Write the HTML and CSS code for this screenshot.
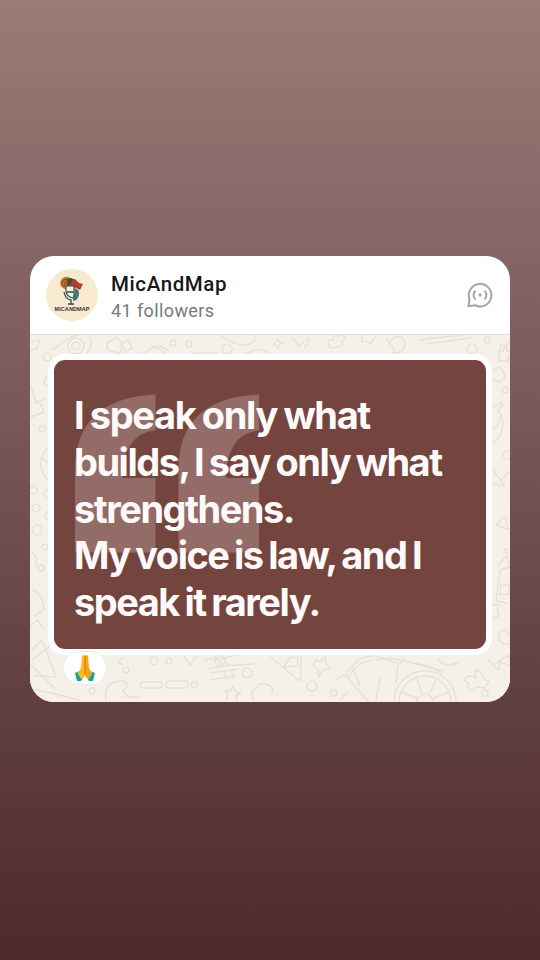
FILE: index.html
```html
<!DOCTYPE html>
<html lang="en">
<head>
<meta charset="utf-8">
<title>MicAndMap</title>
<link rel="stylesheet" href="styles.css">
</head>
<body>
<main class="card">
  <header class="head">
    <svg class="avatar" viewBox="0 0 52 52">
      <circle cx="26" cy="26" r="26" fill="#f8ead0"/>
      <circle cx="20.500" cy="14" r="6.200" fill="#cf7b22"/>
      <path d="M16 17q-1-7 6-7M18 18q0-6 6-7" fill="none" stroke="#8d531f" stroke-width="1.300"/>
      <path d="M20 16q1-7 9-6l4 4 4 1-3 6q-4-3-10-3z" fill="#b63d2c"/>
      <path d="M22 10q3-2 5 0l-2 5-4 1z" fill="#37523f"/>
      <path d="M20 17h8v12q-8-1-8-7z" fill="#fff3dc" stroke="#314852" stroke-width="1.100"/>
      <path d="M28 19q5 1 5 5 0 7-6 8v-5q3-3 1-8z" fill="#3f7580"/>
      <path d="M18 23q1 7 7 8v4m-3 0h6M21 23h7" fill="none" stroke="#314852" stroke-width="1.300"/>
      <text class="logo-text" x="26" y="41.500" text-anchor="middle" textLength="35">MICANDMAP</text>
    </svg>
    <div class="who">
      <h1 class="name">MicAndMap</h1>
      <p class="followers">41 followers</p>
    </div>
    <svg class="channel" viewBox="0 0 28 28" fill="none" stroke="#a5a8aa" stroke-width="2.100" stroke-linecap="round" stroke-linejoin="round">
      <path d="M3.500 18.200A11.300 11.300 0 1 1 9 24.300L2.500 25.300z"/>
      <path d="M9 10.200q-2.800 3.800 0 7.600M19 10.200q2.800 3.800 0 7.600" stroke-width="2"/>
      <circle cx="14" cy="14" r="1.700" fill="#a5a8aa" stroke="none"/>
    </svg>
  </header>
  <section class="chat">
    <svg class="doodles" viewBox="30 335 480 367" fill="none" stroke="#e7e0d7" stroke-width="1.500" stroke-linecap="round" stroke-linejoin="round">
      <!-- top strip -->
      <path d="M31 342l9-2-3 8-6 3M52 350l19-13 7-2M89 336q5 10-3 18M108 350q-3-9 4-9 2-6 6-1 6 1 2 6 4 6-2 7zM122 343l7-3 3 9-7 2zM143 354q12-12 22-1M152 347q8-4 16 4M193 353h23M222 336q17 13 30 7 4-3 3-8M246 354q13-9 25 0M292 337l7 9 10-9M310 339l-5 9M329 347q-3-8 4-7 0-6 5-4 5-3 7 3-5 2-2 5-6 6-14 3zM362 336v5l9 2 4-6M386 339q10 8 7 14 12 0 12-9 0-8-10-7l-7 7M419 340l44-5M426 344l45-6M499 352l2-8 5 4 4-7"/>
      <circle cx="76" cy="346" r="8"/><circle cx="76" cy="346" r="4"/><circle cx="47" cy="357" r="4"/>
      <circle cx="173" cy="343" r="3"/><circle cx="189" cy="344" r="3"/><circle cx="227" cy="349" r="5"/><circle cx="472" cy="349" r="5"/><circle cx="487" cy="340" r="3"/>
      <path d="M278 339l1 3 4 1-4 2-1 4-2-4-3-1 3-2z"/>
      <!-- left strip -->
      <path d="M47 376q-6 7 0 10M31 386l5 17 8-4M31 417l13-5-3-8M48 448q-14 12-1 32M42 458l8 7M31 552q8 4 4 15M33 590q10 4 11 19l-9 7M31 625l7-5 5 9M33 659l17-13M32 650l10-10 14 37-21-1M31 665l24 24"/>
      <circle cx="42" cy="429" r="3"/><circle cx="33" cy="490" r="4"/><circle cx="36" cy="508" r="4"/><circle cx="37" cy="530" r="5"/><circle cx="45" cy="547" r="3"/><circle cx="41" cy="568" r="3"/><circle cx="48" cy="494" r="4"/><circle cx="49" cy="516" r="4"/>
      <!-- right strip -->
      <path d="M498 352l5-1 2-5 3 5 4 1-4 5v5l-5-2-5 2 2-6zM493 370q8-6 10 2 5 5-3 10l-7-2M494 407l7-5 2 3-5 6q8 8 3 23-3 6-8 8M493 430q9-7 7-18M493 470l12 16-13-2M501 480l8-8M496 525l9-9 3 13zM498 566l9-11 3 12-10 3-4 31 11 2M501 585h8v9h-9zM493 605q8-3 4 5 5 5-3 8M498 638q2-9 7-8l5 6v9l-8-2zM498 661l12-6v11z"/>
      <circle cx="505" cy="390" r="3"/><circle cx="507" cy="455" r="4"/><circle cx="506" cy="551" r="2"/><circle cx="485" cy="693" r="3"/>
      <!-- bottom strip -->
      <path d="M30 689q19 3 49 11M106 701q-3-16 9-19 10-3 13 3l-5 6 5 6 9 0M123 657l-5 5 5 3M184 656l6 9 7-9M205 662q5-6 10-2l31-7M208 669l13-3 34-2M210 673l28-4M209 680l26-4M214 656l8 8M228 665l-3-7M223 671l4 8M231 670l3 8M271 657l27 23h3v-24M284 667l6-10 8 1v8l-14 1M316 660l5 2 4-6 1 8 5 4-8 2-4 7-1-8-5-4zM345 677q10-22 31-21M348 678q9-17 26-18M337 679l6-4 5 3 20 23M352 666l8 20M380 678l-4 22M376 656l22 7-2 20M376 660l14-2 42 9 10 7M400 665l2-5 40 11M438 660q9 9 21 2M464 680q5-7 12-2l-1-8 5 1 4 8 5 3-5 6-7-1-5 4-5-4 2-4zM488 660l6 5 7-5-3 10z"/>
      <rect x="140" y="682" width="22" height="6" rx="3"/><rect x="166" y="681" width="22" height="7" rx="3"/>
      <circle cx="154" cy="661" r="4"/><circle cx="169" cy="661" r="3"/><circle cx="126" cy="670" r="3"/><circle cx="92" cy="691" r="3"/><circle cx="194" cy="685" r="3"/><circle cx="247" cy="673" r="5"/><circle cx="220" cy="661" r="5"/><circle cx="312" cy="686" r="5"/><circle cx="334" cy="693" r="3"/>
      <path d="M226 700l2-6-3-3 5 0 3-5 2 6 6 1-5 3 1 5M254 700q-6-9 3-12 3-7 11-3 8 4 3 10M340 700l8-8"/>
      <circle cx="425" cy="702" r="31"/><circle cx="425" cy="702" r="26"/><circle cx="425" cy="702" r="8"/>
      <path d="M422 694l-5-16M429 694l8-15M432 699l16-7M418 699l-16-7"/>
    </svg>
    <article class="bubble">
      <svg class="quotes" viewBox="0 0 185 159" fill="#936c67">
        <path d="M0 159V76Q0 4 81 0V36Q48 40 48 84H81V159z"/>
        <path d="M104 159V76Q104 4 185 0V36Q152 40 152 84H185V159z"/>
      </svg>
      <p class="quote">
        <span class="line first">I speak only what</span>
        <span class="line">builds, I say only what</span>
        <span class="line">strengthens.</span>
        <span class="line">My voice is law, and I</span>
        <span class="line">speak it rarely.</span>
      </p>
    </article>
    <div class="reaction">
      <svg class="hands" viewBox="0 0 20 26">
        <path d="M0 18l5-2 4 5-3 5H2z" fill="#16a394"/><path d="M20 18l-5-2-4 5 3 5h4z" fill="#16a394"/>
        <path d="M2 18l4-3 4 5-4 4z" fill="#35bfa6"/><path d="M18 18l-4-3-4 5 4 4z" fill="#35bfa6"/>
        <path d="M7 1q2-2 3 0v20l-4 3-3-6 3-5z" fill="#fdb91e"/>
        <path d="M13 1q-2-2-3 0v20l4 3 3-6-3-5z" fill="#f7a514"/>
        <path d="M10 1v18" stroke="#c77510" stroke-width="1"/>
      </svg>
    </div>
  </section>
</main>
</body>
</html>
```
FILE: styles.css
```css
* { box-sizing: border-box; }
body {
  margin: 0;
  height: 960px;
  padding: 256px 30px 0;
  background: linear-gradient(#997b78, #4e292a);
  font-family: Roboto, "Liberation Sans", sans-serif;
}
.card {
  height: 446px;
  border-radius: 24px;
  overflow: hidden;
  background: #fff;
}
.head {
  display: flex;
  align-items: center;
  height: 79px;
  padding: 0 16px;
  border-bottom: 1px solid #dedddb;
}
.avatar { width: 52px; height: 52px; flex: none; }
.logo-text { font: 700 5.500px "Liberation Sans", sans-serif; fill: #37322c; }
.who { flex: 1; margin-left: 13px; padding-top: 3px; }
.name {
  margin: 0;
  font-size: 20.500px;
  line-height: 25px;
  font-weight: 500;
  letter-spacing: 0.600px;
  color: #151719;
}
.followers {
  margin: 2px 0 0;
  font-size: 18px;
  line-height: 23px;
  letter-spacing: 0.400px;
  color: #747a7e;
}
.channel { width: 28px; height: 28px; }
.chat {
  position: relative;
  height: 367px;
  padding: 19px 18px 0;
  background: #f5f1ea;
}
.doodles { position: absolute; inset: 0; width: 480px; height: 367px; }
.bubble {
  position: relative;
  height: 301px;
  border: 6px solid #fff;
  border-radius: 17px;
  background: #74453f;
  padding: 32px 21px 0;
}
.quotes { position: absolute; left: 21px; top: 34px; width: 184px; height: 159px; }
.quote {
  position: relative;
  margin: 0 0 0 -1px;
  color: #fffafa;
  font: 700 38px/46.800px Inter, sans-serif;
}
.line { display: block; white-space: nowrap; letter-spacing: -1.500px; word-spacing: -1.900px; }
.first { letter-spacing: -1.350px; word-spacing: -1.200px; }
.reaction {
  position: relative;
  display: flex;
  align-items: center;
  justify-content: center;
  width: 44px;
  height: 34px;
  margin: -4px 0 0 15px;
  border: 1px solid #eeebe5;
  border-radius: 17px;
  background: #fff;
}
.hands { width: 20px; height: 26px; }
```
